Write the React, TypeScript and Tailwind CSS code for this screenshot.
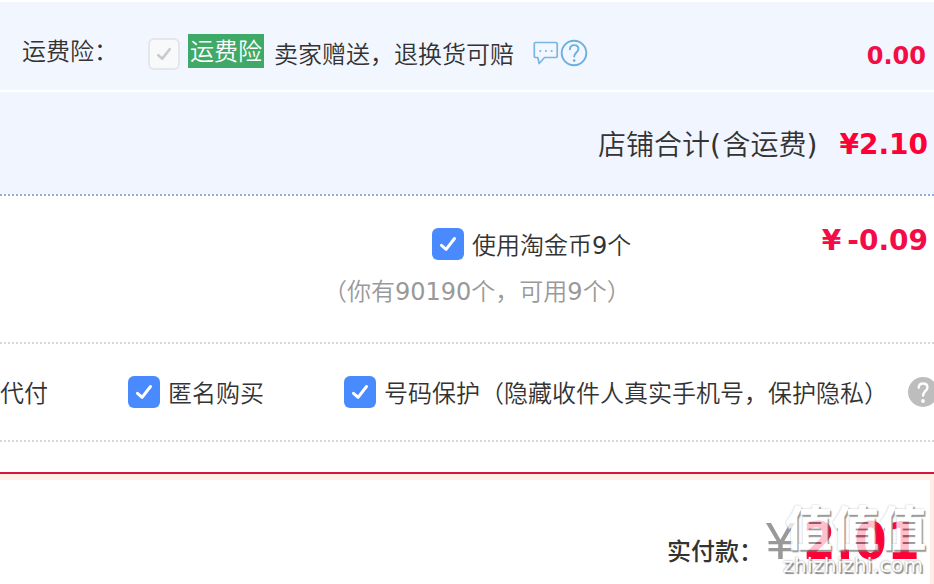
import type { ReactNode } from 'react';

function CheckMark({ className }: { className: string }) {
  return (
    <svg viewBox="0 0 32 32" className={className} fill="none" stroke="currentColor" strokeWidth={3}>
      <path strokeLinecap="round" strokeLinejoin="round" d="M9.500 17.300l4.600 4L22.500 10.500" />
    </svg>
  );
}

interface OptionProps {
  children: ReactNode;
  className?: string;
}

function Option({ children, className = '' }: OptionProps) {
  return (
    <label className={`flex items-center whitespace-nowrap ${className}`}>
      <span className="mr-2 size-8 shrink-0 rounded-md bg-[#4a8aff] text-white">
        <CheckMark className="size-8" />
      </span>
      <span className="relative top-0.5">{children}</span>
    </label>
  );
}

function ChatIcon() {
  return (
    <svg viewBox="0 0 26 26" className="h-[26px] w-[26px]" fill="none" stroke="#79b7e2" strokeWidth={1.7}>
      <path strokeLinejoin="round" d="M2.500 2.500H23q1.200 0 1.200 1.200v12.600q0 1.200-1.200 1.200H11.500L6.200 23.500l-1.400-6H2.500q-1.200 0-1.200-1.200V3.700q0-1.200 1.200-1.200z" />
      <path strokeLinecap="round" strokeWidth={2} d="M7.200 11h.1M12.900 11h.1M18.600 11h.1" />
    </svg>
  );
}

function HelpIcon() {
  return (
    <svg viewBox="0 0 28 28" className="ml-px size-7" fill="none" stroke="#6aafe0" strokeWidth={1.9}>
      <circle cx="14" cy="14" r="12.3" />
      <path strokeLinecap="round" d="M9.900 10.300c.2-2.700 1.900-4.200 4.300-4.200 2.500 0 4.200 1.600 4.200 3.900 0 3.400-4.200 3.700-4.200 7.600" />
      <circle cx="14.200" cy="21.500" r="1.300" fill="#6aafe0" stroke="none" />
    </svg>
  );
}

function HelpBadge() {
  return (
    <svg viewBox="0 0 30 30" className="ml-auto size-[30px] shrink-0" fill="none">
      <circle cx="15" cy="15" r="15" fill="#bdbdbd" />
      <path stroke="#fff" strokeWidth={2.4} strokeLinecap="round" d="M10.700 10.700c.2-2.700 1.900-4.200 4.400-4.200 2.600 0 4.300 1.600 4.300 3.900 0 3.300-4.300 3.900-4.300 8.100" />
      <circle cx="15" cy="24" r="1.900" fill="#fff" />
    </svg>
  );
}

function DottedLine({ color }: { color: string }) {
  return (
    <svg className="block h-0.5 w-full shrink-0">
      <line x1="0" y1="1" x2="100%" y2="1" stroke={color} strokeWidth={2} strokeDasharray="2 2" />
    </svg>
  );
}

function Watermark() {
  return (
    <div className="absolute top-[23px] left-[783px] w-[146px] whitespace-nowrap text-white">
      <div className="ml-0.5 font-['Noto_Sans_CJK_SC',sans-serif] text-[47px] leading-[56px] font-black opacity-75 [text-shadow:1.5px_1.5px_1px_#777,0_0_2px_#aaa]">
        值值值
      </div>
      <div className="font-['DejaVu_Sans',sans-serif] text-[20px] leading-6 font-normal tracking-[0.4px] [text-shadow:1.5px_1.5px_1px_#888,0_0_2px_#888]">
        zhizhizhi.com
      </div>
    </div>
  );
}

export default function App() {
  return (
    <div className="flex h-[584px] w-[934px] flex-col overflow-hidden bg-white font-['DejaVu_Sans','Noto_Sans_CJK_SC',sans-serif] text-2xl leading-8 font-[350] text-[#333]">
      {/* Freight insurance */}
      <section className="mt-0.5 flex h-[88px] shrink-0 items-start bg-[#f2f6ff] pt-8 pr-2">
        <span className="mt-0.5 w-[125px] shrink-0 pl-[22px] whitespace-nowrap">运费险：</span>
        <span className="mt-1 ml-[23px] flex size-8 items-center justify-center rounded-md border-2 border-[#e5e6e9] bg-[#f8f9fb] text-[#c9cace]">
          <CheckMark className="size-7 shrink-0" />
        </span>
        <span className="ml-2 h-[34px] w-[76px] bg-[#3fa967] text-center leading-[36px] whitespace-nowrap text-white">
          运费险
        </span>
        <span className="mt-[5px] ml-2.5">卖家赠送，退换货可赔</span>
        <span className="mt-[5px] ml-[19px] flex items-center">
          <ChatIcon />
          <HelpIcon />
        </span>
        <strong className="mt-1.5 ml-auto font-bold text-[#f20d48]">0.00</strong>
      </section>

      {/* Shop subtotal */}
      <section className="mt-0.5 flex h-[102px] shrink-0 items-center justify-end bg-[#f0f5ff] pt-1 pr-1.5 text-[28px]">
        <span className="pt-0.5">
          店铺合计<span className="font-normal tracking-[1.5px]">(</span>含运费<span className="font-normal tracking-[2px]">)</span>
        </span>
        <strong className="ml-5 font-bold text-[#ff0036]">¥2.10</strong>
      </section>
      <DottedLine color="#92aee0" />

      {/* Coins */}
      <section className="flex h-[146px] shrink-0 justify-between pr-1.5">
        <div className="ml-[323px] flex flex-col pt-8">
          <Option className="ml-[109px]">
            使用淘金币<span className="font-normal">9</span>个
          </Option>
          <span className="mt-4 whitespace-nowrap text-[#999]">
            （你有<span className="font-normal">90190</span>个，可用<span className="font-normal">9</span>个）
          </span>
        </div>
        <strong className="flex pt-[29px] text-[28px] font-bold text-[#f20d48]">
          <span className="mr-1.5">¥</span>-0.09
        </strong>
      </section>
      <DottedLine color="#d9d9d9" />

      {/* Order options */}
      <section className="flex h-24 shrink-0 items-center">
        <span className="relative top-0.5 w-32 shrink-0">代付</span>
        <Option className="w-[216px] shrink-0">匿名购买</Option>
        <Option className="w-[564px] shrink-0">号码保护（隐藏收件人真实手机号，保护隐私）</Option>
        <HelpBadge />
      </section>
      <DottedLine color="#d9d9d9" />

      {/* Amount due */}
      <section className="relative mt-[30px] grow border-t-2 border-[#d5143e]">
        <div className="h-full border-t-6 border-r-4 border-[#ffede6]">
          <div className="flex items-baseline pt-[31px] pl-[667px] leading-[60px] whitespace-nowrap">
            <span className="relative top-px w-[99px] font-medium text-[#333]">实付款：</span>
            <span className="font-['Liberation_Sans',sans-serif] text-[52px] font-normal text-[#999]">¥</span>
            <strong className="ml-2 font-['DejaVu_Sans_Condensed','DejaVu_Sans',sans-serif] text-[52px] font-bold tracking-[0.5px] text-[#ff0036]">
              2.01
            </strong>
          </div>
        </div>
        <Watermark />
      </section>
    </div>
  );
}
